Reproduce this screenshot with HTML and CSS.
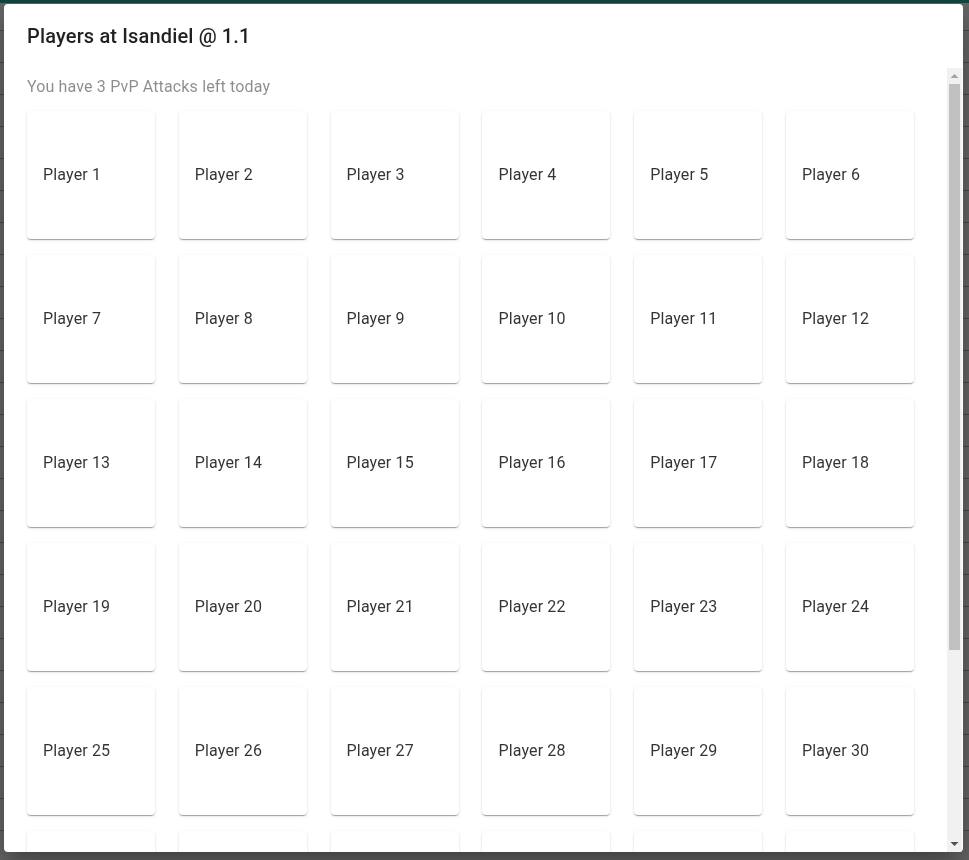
FILE: index.html
```html
<!DOCTYPE html>
<html lang="en">
<head>
<meta charset="utf-8">
<title>Players</title>
<link rel="stylesheet" href="styles.css">
</head>
<body>
<div class="page">
  <div class="topbar"></div>
  <div class="rows"></div>
</div>
<div class="dialog" role="dialog">
  <h2 class="dialog-title">Players at Isandiel @ 1.1</h2>
  <div class="dialog-body">
    <div class="dialog-content">
      <p class="subtitle">You have 3 PvP Attacks left today</p>
      <div class="player-grid">
        <div class="card">Player 1</div>
        <div class="card">Player 2</div>
        <div class="card">Player 3</div>
        <div class="card">Player 4</div>
        <div class="card">Player 5</div>
        <div class="card">Player 6</div>
        <div class="card">Player 7</div>
        <div class="card">Player 8</div>
        <div class="card">Player 9</div>
        <div class="card">Player 10</div>
        <div class="card">Player 11</div>
        <div class="card">Player 12</div>
        <div class="card">Player 13</div>
        <div class="card">Player 14</div>
        <div class="card">Player 15</div>
        <div class="card">Player 16</div>
        <div class="card">Player 17</div>
        <div class="card">Player 18</div>
        <div class="card">Player 19</div>
        <div class="card">Player 20</div>
        <div class="card">Player 21</div>
        <div class="card">Player 22</div>
        <div class="card">Player 23</div>
        <div class="card">Player 24</div>
        <div class="card">Player 25</div>
        <div class="card">Player 26</div>
        <div class="card">Player 27</div>
        <div class="card">Player 28</div>
        <div class="card">Player 29</div>
        <div class="card">Player 30</div>
        <div class="card">Player 31</div>
        <div class="card">Player 32</div>
        <div class="card">Player 33</div>
        <div class="card">Player 34</div>
        <div class="card">Player 35</div>
        <div class="card">Player 36</div>
        <div class="card">Player 37</div>
        <div class="card">Player 38</div>
        <div class="card">Player 39</div>
        <div class="card">Player 40</div>
        <div class="card">Player 41</div>
        <div class="card">Player 42</div>
      </div>
    </div>
    <div class="scrollbar" aria-hidden="true">
      <div class="sb-button">
        <svg width="15" height="16" viewBox="0 0 15 16"><path d="M3.5 10 L11.5 10 L7.5 6 Z" fill="#a3a3a3"/></svg>
      </div>
      <div class="sb-track"><div class="sb-thumb"></div></div>
      <div class="sb-button">
        <svg width="15" height="16" viewBox="0 0 15 16"><path d="M3.5 6 L11.5 6 L7.5 10 Z" fill="#505050"/></svg>
      </div>
    </div>
  </div>
</div>
</body>
</html>
```

FILE: styles.css
```css
* { box-sizing: border-box; }

html, body {
  margin: 0;
  padding: 0;
  height: 100%;
  overflow: hidden;
}

body {
  background: #666666;
  font-family: Roboto, "Liberation Sans", Arial, sans-serif;
}

.page {
  height: 100%;
  display: flex;
  flex-direction: column;
}

.topbar {
  height: 3px;
  background: #0a4a42;
}

.rows {
  flex: 1;
  background-color: #666666;
  background-image: repeating-linear-gradient(
    to bottom,
    transparent 0,
    transparent 31px,
    #4a4a4a 31px,
    #4a4a4a 32px
  );
  background-position: 0 -4px;
}

.dialog {
  position: fixed;
  left: 4px;
  top: 4px;
  width: 959px;
  height: 848px;
  background: #ffffff;
  border-radius: 4px;
  display: flex;
  flex-direction: column;
  overflow: hidden;
  box-shadow: 0px 11px 15px -7px rgba(0,0,0,0.2),
              0px 24px 38px 3px rgba(0,0,0,0.14),
              0px 9px 46px 8px rgba(0,0,0,0.12);
}

.dialog-title {
  margin: 0;
  padding: 16px 24px 16px 23px;
  font-size: 20px;
  line-height: 32px;
  font-weight: 500;
  letter-spacing: 0.15px;
  color: rgba(0,0,0,0.87);
  flex: none;
}

.dialog-body {
  flex: 1;
  min-height: 0;
  display: flex;
}

.dialog-content {
  flex: 1;
  min-width: 0;
  overflow: hidden;
  padding: 7px 17px 8px 23px;
}

.scrollbar {
  width: 15px;
  margin-right: 1px;
  flex: none;
  background: #f1f1f1;
  display: flex;
  flex-direction: column;
}

.sb-button {
  height: 16px;
  flex: none;
}

.sb-button svg {
  display: block;
}

.sb-track {
  flex: 1;
  display: flex;
  flex-direction: column;
}

.sb-thumb {
  height: 566px;
  margin: 0 2px;
  background: #c1c1c1;
}

.subtitle {
  margin: 0 0 12px 0;
  font-size: 16px;
  line-height: 24px;
  letter-spacing: 0.15px;
  color: rgba(0,0,0,0.45);
}

.player-grid {
  display: grid;
  grid-template-columns: repeat(6, 128px);
  column-gap: 23.8px;
  row-gap: 16px;
}

.card {
  height: 128px;
  background: #ffffff;
  border-radius: 4px;
  box-shadow: 0px 2px 1px -1px rgba(0,0,0,0.2),
              0px 1px 1px 0px rgba(0,0,0,0.14),
              0px 1px 3px 0px rgba(0,0,0,0.12);
  display: flex;
  align-items: center;
  padding: 0 16px;
  font-size: 16px;
  line-height: 24px;
  letter-spacing: 0.15px;
  color: rgba(0,0,0,0.8);
}
```
